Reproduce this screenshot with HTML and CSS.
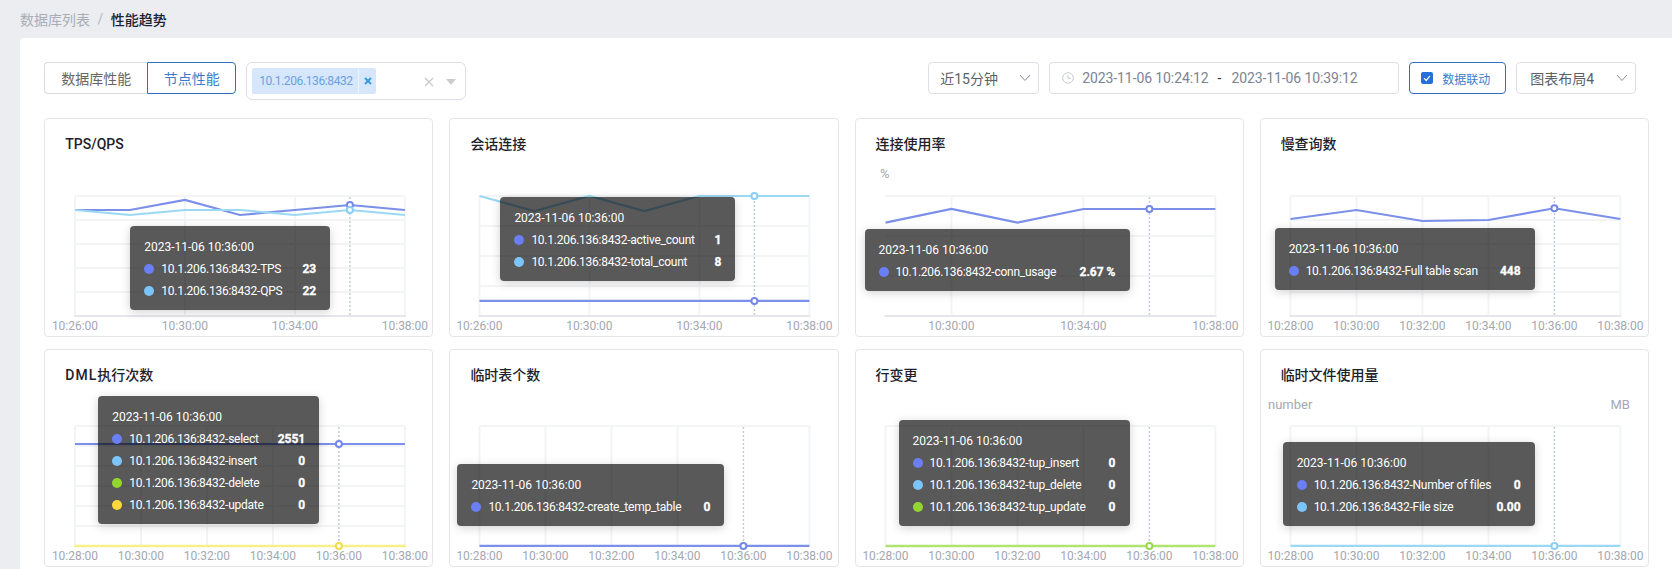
FILE: index.html
```html
<!DOCTYPE html>
<html lang="zh">
<head>
<meta charset="utf-8">
<title>性能趋势</title>
<link rel="stylesheet" href="styles.css">
</head>
<body>
<nav class="crumbs"><span class="crumb-link">数据库列表</span><span class="crumb-sep">/</span><span class="crumb-current">性能趋势</span></nav>
<main class="panel">
  <div class="toolbar">
    <div class="tool-left">
      <div class="tabs"><button class="tab">数据库性能</button><button class="tab tab-active">节点性能</button></div>
      <div class="multi">
        <span class="tag"><span class="tag-text">10.1.206.136:8432</span><span class="tag-close"><svg width="8" height="8" viewBox="0 0 8 8"><path d="M1 1l6 6M7 1L1 7" stroke="#3a9bdc" stroke-width="2" fill="none"/></svg></span></span>
        <span class="multi-icons">
          <svg width="10" height="10" viewBox="0 0 10 10"><path d="M1 1l8 8M9 1L1 9" stroke="#ccc" stroke-width="1.5" fill="none"/></svg>
          <svg width="10" height="6" viewBox="0 0 10 6"><path d="M0 0h10L5 6z" fill="#ccc"/></svg>
        </span>
      </div>
    </div>
    <div class="tool-right">
      <div class="box sel-range"><span>近15分钟</span><svg class="chev" width="12" height="8" viewBox="0 0 12 8"><path d="M1 1l5 5.5L11 1" stroke="#8a8f99" fill="none"/></svg></div>
      <div class="box dates">
        <svg class="clock" width="12" height="12" viewBox="0 0 12 12"><circle cx="6" cy="6" r="5.3" stroke="#c8cbd0" fill="none"/><path d="M6 3v3.3h2.6" stroke="#c8cbd0" fill="none"/></svg>
        <span class="date-val">2023-11-06 10:24:12</span><span class="date-sep">-</span><span class="date-val">2023-11-06 10:39:12</span>
      </div>
      <label class="box link-check"><svg width="12" height="12" viewBox="0 0 12 12"><rect width="12" height="12" rx="2" fill="#2470d8"/><path d="M3 6.2l2.2 2.3L9 3.8" stroke="#fff" stroke-width="1.2" fill="none"/></svg><span>数据联动</span></label>
      <div class="box sel-layout"><span>图表布局4</span><svg class="chev" width="12" height="8" viewBox="0 0 12 8"><path d="M1 1l5 5.5L11 1" stroke="#8a8f99" fill="none"/></svg></div>
    </div>
  </div>

  <div class="grid">
    <section class="card">
      <h3 class="card-title">TPS/QPS</h3>
      <svg class="chart" viewBox="1 53 387.25 165" preserveAspectRatio="xMinYMin">
        <path class="grid-line" d="M31 78H361M31 102H361M31 126H361M31 150H361M31 174H361M31 78V198M141 78V198M251 78V198M361 78V198"/>
        <path class="axis" d="M30 198H362"/>
        <path class="pointer" d="M306 79V198"/>
        <polyline class="line c-blue" points="31,92 86,92 141,82 196,97 251,92 306,87 361,92"/>
        <polyline class="line c-sky" points="31,92 86,97 141,92 196,92 251,97 306,92 361,97"/>
        <circle class="mark c-blue" cx="306" cy="87" r="3"/>
        <circle class="mark c-sky" cx="306" cy="92" r="3"/>
        <g class="ticks"><text x="31" y="212">10:26:00</text><text x="141" y="212">10:30:00</text><text x="251" y="212">10:34:00</text><text x="361" y="212">10:38:00</text></g>
      </svg>
      <div class="tip tip-1">
        <div class="tip-date">2023-11-06 10:36:00</div>
        <div class="tip-row"><i class="dot d-blue"></i><span class="tip-name">10.1.206.136:8432-TPS</span><b class="tip-val">23</b></div>
        <div class="tip-row"><i class="dot d-sky"></i><span class="tip-name">10.1.206.136:8432-QPS</span><b class="tip-val">22</b></div>
      </div>
    </section>

    <section class="card">
      <h3 class="card-title">会话连接</h3>
      <svg class="chart" viewBox="1 53 387.25 165" preserveAspectRatio="xMinYMin">
        <path class="grid-line" d="M30.5 78H360.5M30.5 108H360.5M30.5 138H360.5M30.5 168H360.5M30.5 78V198M140.5 78V198M250.5 78V198M360.5 78V198"/>
        <path class="axis" d="M29.5 198H361.5"/>
        <path class="pointer" d="M305.5 79V198"/>
        <polyline class="line c-sky" points="30.5,78 85.5,93 140.5,78 195.5,93 250.5,78 305.5,78 360.5,78"/>
        <path class="line c-blue" d="M30.5 183H360.5"/>
        <circle class="mark c-sky" cx="305.5" cy="78" r="3"/>
        <circle class="mark c-blue" cx="305.5" cy="183" r="3"/>
        <g class="ticks"><text x="30.5" y="212">10:26:00</text><text x="140.5" y="212">10:30:00</text><text x="250.5" y="212">10:34:00</text><text x="360.5" y="212">10:38:00</text></g>
      </svg>
      <div class="tip tip-2">
        <div class="tip-date">2023-11-06 10:36:00</div>
        <div class="tip-row"><i class="dot d-blue"></i><span class="tip-name">10.1.206.136:8432-active_count</span><b class="tip-val">1</b></div>
        <div class="tip-row"><i class="dot d-sky"></i><span class="tip-name">10.1.206.136:8432-total_count</span><b class="tip-val">8</b></div>
      </div>
    </section>

    <section class="card">
      <h3 class="card-title">连接使用率</h3>
      <svg class="chart" viewBox="1 53 387.25 165" preserveAspectRatio="xMinYMin">
        <path class="grid-line" d="M30.5 78H360.5M30.5 118H360.5M30.5 158H360.5M96.5 78V198M228.5 78V198M360.5 78V198"/>
        <path class="axis" d="M29.5 198H361.5"/>
        <path class="pointer" d="M294.5 79V198"/>
        <polyline class="line c-blue" points="30.5,104.7 96.5,91 162.5,104.7 228.5,91 294.5,91 360.5,91"/>
        <circle class="mark c-blue" cx="294.5" cy="91" r="3"/>
        <text class="unit" x="25" y="60">%</text>
        <g class="ticks"><text x="96.5" y="212">10:30:00</text><text x="228.5" y="212">10:34:00</text><text x="360.5" y="212">10:38:00</text></g>
      </svg>
      <div class="tip tip-3">
        <div class="tip-date">2023-11-06 10:36:00</div>
        <div class="tip-row"><i class="dot d-blue"></i><span class="tip-name">10.1.206.136:8432-conn_usage</span><b class="tip-val">2.67 %</b></div>
      </div>
    </section>

    <section class="card">
      <h3 class="card-title">慢查询数</h3>
      <svg class="chart" viewBox="1 53 387.25 165" preserveAspectRatio="xMinYMin">
        <path class="grid-line" d="M30.5 78H360.5M30.5 102H360.5M30.5 126H360.5M30.5 150H360.5M30.5 174H360.5M30.5 78V198M96.5 78V198M162.5 78V198M228.5 78V198M360.5 78V198"/>
        <path class="axis" d="M29.5 198H361.5"/>
        <path class="pointer" d="M294.5 79V198"/>
        <polyline class="line c-blue" points="30.5,101 96.5,92 162.5,103 228.5,102 294.5,90.3 360.5,101"/>
        <circle class="mark c-blue" cx="294.5" cy="90.3" r="3"/>
        <g class="ticks"><text x="30.5" y="212">10:28:00</text><text x="96.5" y="212">10:30:00</text><text x="162.5" y="212">10:32:00</text><text x="228.5" y="212">10:34:00</text><text x="294.5" y="212">10:36:00</text><text x="360.5" y="212">10:38:00</text></g>
      </svg>
      <div class="tip tip-4">
        <div class="tip-date">2023-11-06 10:36:00</div>
        <div class="tip-row"><i class="dot d-blue"></i><span class="tip-name">10.1.206.136:8432-Full table scan</span><b class="tip-val">448</b></div>
      </div>
    </section>

    <section class="card">
      <h3 class="card-title"><span class="title-latin">DML</span>执行次数</h3>
      <svg class="chart" viewBox="1 53 387.25 164" preserveAspectRatio="xMinYMin">
        <path class="grid-line" d="M31 77H361M31 97H361M31 117H361M31 137H361M31 157H361M31 177H361M31 77V197M97 77V197M163 77V197M229 77V197M361 77V197"/>
        <path class="pointer" d="M295 78V197"/>
        <path class="line c-blue" d="M31 95H361"/>
        <path class="line c-yellow" d="M30 197H362"/>
        <circle class="mark c-blue" cx="295" cy="95" r="3"/>
        <circle class="mark c-gold" cx="295" cy="197" r="3"/>
        <g class="ticks"><text x="31" y="211">10:28:00</text><text x="97" y="211">10:30:00</text><text x="163" y="211">10:32:00</text><text x="229" y="211">10:34:00</text><text x="295" y="211">10:36:00</text><text x="361" y="211">10:38:00</text></g>
      </svg>
      <div class="tip tip-5">
        <div class="tip-date">2023-11-06 10:36:00</div>
        <div class="tip-row"><i class="dot d-blue"></i><span class="tip-name">10.1.206.136:8432-select</span><b class="tip-val">2551</b></div>
        <div class="tip-row"><i class="dot d-sky"></i><span class="tip-name">10.1.206.136:8432-insert</span><b class="tip-val">0</b></div>
        <div class="tip-row"><i class="dot d-green"></i><span class="tip-name">10.1.206.136:8432-delete</span><b class="tip-val">0</b></div>
        <div class="tip-row"><i class="dot d-yellow"></i><span class="tip-name">10.1.206.136:8432-update</span><b class="tip-val">0</b></div>
      </div>
    </section>

    <section class="card">
      <h3 class="card-title">临时表个数</h3>
      <svg class="chart" viewBox="1 53 387.25 164" preserveAspectRatio="xMinYMin">
        <path class="grid-line" d="M30.5 77H360.5M30.5 77V197M96.5 77V197M162.5 77V197M228.5 77V197M360.5 77V197"/>
        <path class="pointer" d="M294.5 78V197"/>
        <path class="line c-blue" d="M30.5 197H360.5"/>
        <circle class="mark c-blue" cx="294.5" cy="197" r="3"/>
        <g class="ticks"><text x="30.5" y="211">10:28:00</text><text x="96.5" y="211">10:30:00</text><text x="162.5" y="211">10:32:00</text><text x="228.5" y="211">10:34:00</text><text x="294.5" y="211">10:36:00</text><text x="360.5" y="211">10:38:00</text></g>
      </svg>
      <div class="tip tip-6">
        <div class="tip-date">2023-11-06 10:36:00</div>
        <div class="tip-row"><i class="dot d-blue"></i><span class="tip-name">10.1.206.136:8432-create_temp_table</span><b class="tip-val">0</b></div>
      </div>
    </section>

    <section class="card">
      <h3 class="card-title">行变更</h3>
      <svg class="chart" viewBox="1 53 387.25 164" preserveAspectRatio="xMinYMin">
        <path class="grid-line" d="M30.5 77H360.5M30.5 77V197M96.5 77V197M162.5 77V197M228.5 77V197M360.5 77V197"/>
        <path class="pointer" d="M294.5 78V197"/>
        <path class="line c-green" d="M30.5 197H360.5"/>
        <circle class="mark c-green" cx="294.5" cy="197" r="3"/>
        <g class="ticks"><text x="30.5" y="211">10:28:00</text><text x="96.5" y="211">10:30:00</text><text x="162.5" y="211">10:32:00</text><text x="228.5" y="211">10:34:00</text><text x="294.5" y="211">10:36:00</text><text x="360.5" y="211">10:38:00</text></g>
      </svg>
      <div class="tip tip-7">
        <div class="tip-date">2023-11-06 10:36:00</div>
        <div class="tip-row"><i class="dot d-blue"></i><span class="tip-name">10.1.206.136:8432-tup_insert</span><b class="tip-val">0</b></div>
        <div class="tip-row"><i class="dot d-sky"></i><span class="tip-name">10.1.206.136:8432-tup_delete</span><b class="tip-val">0</b></div>
        <div class="tip-row"><i class="dot d-green"></i><span class="tip-name">10.1.206.136:8432-tup_update</span><b class="tip-val">0</b></div>
      </div>
    </section>

    <section class="card">
      <h3 class="card-title">临时文件使用量</h3>
      <svg class="chart" viewBox="1 53 387.25 164" preserveAspectRatio="xMinYMin">
        <path class="grid-line" d="M30.5 77H360.5M30.5 77V197M96.5 77V197M162.5 77V197M228.5 77V197M360.5 77V197"/>
        <path class="pointer" d="M294.5 78V197"/>
        <path class="line c-sky" d="M30.5 197H360.5"/>
        <circle class="mark c-sky" cx="294.5" cy="197" r="3"/>
        <text class="unit" x="8" y="60">number</text>
        <text class="unit" x="350.5" y="60">MB</text>
        <g class="ticks"><text x="30.5" y="211">10:28:00</text><text x="96.5" y="211">10:30:00</text><text x="162.5" y="211">10:32:00</text><text x="228.5" y="211">10:34:00</text><text x="294.5" y="211">10:36:00</text><text x="360.5" y="211">10:38:00</text></g>
      </svg>
      <div class="tip tip-8">
        <div class="tip-date">2023-11-06 10:36:00</div>
        <div class="tip-row"><i class="dot d-blue"></i><span class="tip-name">10.1.206.136:8432-Number of files</span><b class="tip-val">0</b></div>
        <div class="tip-row"><i class="dot d-sky"></i><span class="tip-name">10.1.206.136:8432-File size</span><b class="tip-val">0.00</b></div>
      </div>
    </section>
  </div>
</main>
</body>
</html>
```
FILE: styles.css
```css
* { box-sizing: border-box; }
html, body { margin: 0; height: 100%; overflow: hidden; }
body {
  background: #ebedf1;
  font-family: Roboto, "Noto Sans CJK SC", sans-serif;
  font-size: 14px;
  color: #333;
}

.crumbs { height: 38px; padding-left: 20px; display: flex; align-items: center; }
.crumb-link { color: #a9adb6; }
.crumb-sep { color: #b4b8c0; margin: 0 7.5px; }
.crumb-current { color: #1c2433; font-weight: 500; }

.panel {
  margin-left: 20px;
  padding: 24px 23px 24px 24.25px;
  background: #fff;
  border-radius: 4px 0 0 0;
  height: 600px;
}

.toolbar { display: flex; justify-content: space-between; align-items: flex-start; height: 56px; padding-right: 12.75px; }
.tool-left, .tool-right { display: flex; align-items: flex-start; }
.tool-left { gap: 10px; }
.tool-right { gap: 10px; }

.tabs { display: flex; height: 32px; }
.tab {
  font: inherit;
  height: 32px;
  padding: 0;
  background: #fff;
  border: 1px solid #d9dbe0;
  color: #666;
  width: 103px;
  white-space: nowrap;
}
.tab:first-child { border-right: 0; border-radius: 4px 0 0 4px; }
.tab-active { width: 89px; border-color: #2e6fc0; color: #3c7dcb; border-radius: 0 4px 4px 0; }

.multi {
  width: 220px;
  height: 38px;
  border: 1px solid #dcdfe6;
  border-radius: 6px;
  padding: 5px;
  display: flex;
  align-items: flex-start;
  justify-content: space-between;
}
.tag {
  display: flex;
  align-items: center;
  width: 124px;
  height: 26px;
  background: #d6e7fc;
  border-radius: 2px;
  font-size: 12px;
  color: #6d9fe0;
  padding-left: 7px;
}
.tag-text { letter-spacing: -0.39px; width: 99px; white-space: nowrap; }
.tag-close { height: 24px; border-left: 1px solid #eef5fe; padding-left: 5px; display: flex; align-items: center; }
.multi-icons { display: flex; align-items: center; gap: 12px; height: 26px; margin-right: 4px; margin-top: 1px; }

.box {
  height: 32px;
  border: 1px solid #dcdfe6;
  border-radius: 4px;
  display: flex;
  align-items: center;
  color: #5c5f66;
}
.sel-range { width: 111px; padding-left: 11px; justify-content: space-between; padding-right: 7px; }
.sel-layout { width: 120px; padding-left: 13px; justify-content: space-between; padding-right: 7px; }
.dates { width: 350px; padding-left: 12px; color: #7c8493; }
.clock { margin-right: 8px; }
.date-val { white-space: nowrap; letter-spacing: -0.1px; }
.date-sep { color: #333; margin: 0 10px 0 9px; }
.link-check { width: 97px; border-color: #2e6fc0; padding-left: 11px; gap: 9px; font-size: 12px; color: #3c7dcb; }

.grid {
  display: grid;
  grid-template-columns: repeat(4, 1fr);
  grid-template-rows: 219px 218px;
  gap: 12px 16px;
  width: 1604.5px;
}
.card {
  position: relative;
  border: 1px solid #e3e5e9;
  border-radius: 4px;
  background: #fff;
  min-width: 0;
}
.card-title {
  margin: 0;
  height: 52px;
  line-height: 50px;
  padding-left: 20px;
  font-size: 14px;
  font-weight: 500;
  color: #1d2129;
}
.title-latin { letter-spacing: 1px; }
.chart { display: block; width: 100%; height: calc(100% - 52px); overflow: visible; }

.grid-line { stroke: #f3f4f6; stroke-width: 2; fill: none; }
.axis { stroke: #e6e7ea; stroke-width: 2; fill: none; }
.pointer { stroke: #c4cbe0; stroke-width: 1.5; stroke-dasharray: 2 2; fill: none; }
.line { stroke-width: 2.2; fill: none; }
.line.c-blue { stroke: #7c8fe9; }
.line.c-sky { stroke: #9bd8f3; }
.line.c-yellow { stroke: #f7ef8a; stroke-width: 2.6; }
.line.c-green { stroke: #b1e36f; stroke-width: 2.4; }
.mark { fill: #fff; stroke-width: 2; }
.mark.c-blue { stroke: #7488ea; }
.mark.c-sky { stroke: #8bcdf5; }
.mark.c-gold { stroke: #f2dc4c; }
.mark.c-green { stroke: #9ad84a; }
.ticks text { font-size: 12px; fill: #a4a8b1; text-anchor: middle; }
.unit { font-size: 13px; fill: #a4a8b1; }

.tip {
  position: absolute;
  padding: 10px 14px 8px;
  background: rgba(0, 0, 0, .65);
  border-radius: 4px;
  box-shadow: 0 2px 10px rgba(0, 0, 0, .18);
  color: #fff;
  font-size: 12px;
  line-height: 22px;
  white-space: nowrap;
}
.tip-1 { left: 85px; top: 107px; width: 200px; }
.tip-2 { left: 50px; top: 78px; width: 235px; }
.tip-3 { left: 9px; top: 110px; width: 265px; }
.tip-4 { left: 14px; top: 109px; width: 260px; }
.tip-5 { left: 53px; top: 46px; width: 221px; }
.tip-6 { left: 7px; top: 114px; width: 267px; }
.tip-7 { left: 43px; top: 70px; width: 231px; }
.tip-8 { left: 22px; top: 92px; width: 252px; }
.tip-row { display: flex; align-items: center; }
.tip-name { letter-spacing: -0.25px; }
.tip-val { margin-left: auto; font-weight: 700; -webkit-text-stroke: 0.3px #fff; }
.dot { width: 10px; height: 10px; border-radius: 50%; margin-right: 7px; flex: none; }
.d-blue { background: #6b7ff5; }
.d-sky { background: #7cc4fc; }
.d-green { background: #92d62f; }
.d-yellow { background: #ffd93b; }
```
